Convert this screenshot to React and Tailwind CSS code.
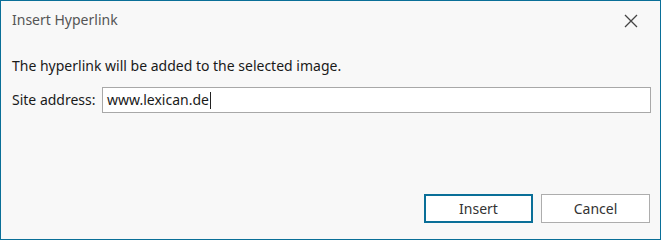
import React from "react";

export default function App() {
  return (
    <div
      className="w-[661px] h-[240px] border border-[#0a6f98] bg-[#f8f8f8] flex flex-col text-[#1a1a1a]"
      style={{ fontFamily: '"Noto Sans", "Open Sans", sans-serif' }}
    >
      {/* Title bar */}
      <div className="flex items-start justify-between h-[42px] pl-[11px] pr-[21px] pt-[9px]">
        <span className="text-[14px] text-[#555555] leading-[20px]">Insert Hyperlink</span>
        <button className="mt-[3px] w-[16px] h-[16px] flex items-center justify-center text-[#444]">
          <svg width="14" height="14" viewBox="0 0 14 14" fill="none" stroke="currentColor" strokeWidth="1.3">
            <path d="M1 1 L13 13 M13 1 L1 13" />
          </svg>
        </button>
      </div>

      {/* Content */}
      <div className="flex flex-col px-[11px] text-[14px] leading-[20px]">
        <p className="mt-[13px]">The hyperlink will be added to the selected image.</p>
        <div className="flex items-center mt-[11px]">
          <span className="w-[90px]">Site address:</span>
          <div className="flex-1 mr-[-2px] h-[26px] border border-[#a8a8a8] bg-white flex items-center px-[4px]">
            <span>www.lexican.de</span>
            <span className="w-px h-[17px] bg-[#222] ml-px" />
          </div>
        </div>
      </div>

      {/* Buttons */}
      <div className="mt-auto flex justify-end gap-[8px] pr-[10px] pb-[16px]">
        <button className="w-[109px] h-[29px] border-2 border-[#0a6f98] bg-white text-[14px] text-[#333]">
          Insert
        </button>
        <button className="w-[109px] h-[29px] border border-[#adadad] bg-white text-[14px] text-[#333]">
          Cancel
        </button>
      </div>
    </div>
  );
}
